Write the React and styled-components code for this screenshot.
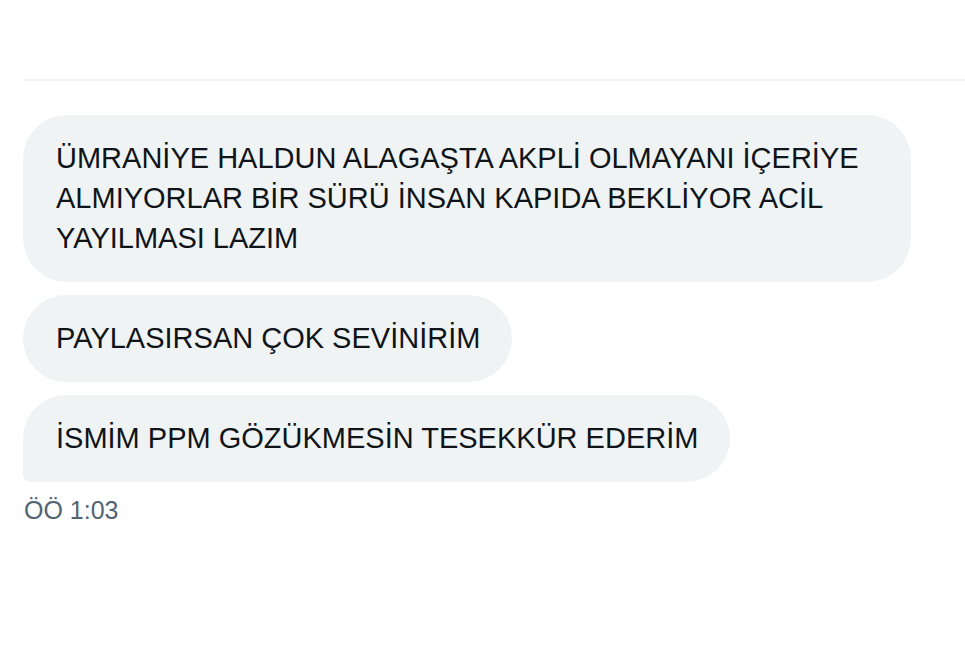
import React from 'react';
import styled, { createGlobalStyle } from 'styled-components';

const GlobalStyle = createGlobalStyle`
  html, body {
    margin: 0;
    padding: 0;
    background: #ffffff;
  }
  body {
    font-family: 'Liberation Sans', Arial, sans-serif;
    -webkit-font-smoothing: antialiased;
  }
`;

const messages = [
  {
    id: 1,
    text: 'ÜMRANİYE HALDUN ALAGAŞTA AKPLİ OLMAYANI İÇERİYE ALMIYORLAR BİR SÜRÜ İNSAN KAPIDA BEKLİYOR ACİL YAYILMASI LAZIM',
    position: 'first',
  },
  { id: 2, text: 'PAYLASIRSAN ÇOK SEVİNİRİM', position: 'middle' },
  { id: 3, text: 'İSMİM PPM GÖZÜKMESİN TESEKKÜR EDERİM', position: 'last' },
];

const App = () => {
  return (
    <>
      <GlobalStyle />
      <Page>
        <Divider />
        <Thread>
          {messages.map((msg) => (
            <Bubble key={msg.id} position={msg.position}>
              {msg.text}
            </Bubble>
          ))}
          <Time>ÖÖ 1:03</Time>
        </Thread>
      </Page>
    </>
  );
};

export default App;

const Page = styled.div`
  width: 965px;
  height: 666px;
  padding-top: 79px;
  padding-left: 24px;
  box-sizing: border-box;
  overflow: hidden;
`;

const Divider = styled.div`
  height: 2px;
  background: #eff3f4;
`;

const Thread = styled.div`
  display: flex;
  flex-direction: column;
  align-items: flex-start;
  gap: 13px;
  padding-top: 34px;
`;

const Bubble = styled.div`
  max-width: 823px;
  padding: 23px 32px 24px 33px;
  margin-left: -1px;
  background: #eff3f4;
  color: #0f1419;
  font-size: 29px;
  line-height: 40px;
  border-radius: ${(props) =>
    props.position === 'last' ? '44px 44px 44px 8px' : '44px'};
`;

const Time = styled.div`
  margin-top: -1px;
  color: #536471;
  font-size: 25px;
  line-height: 32px;
`;
